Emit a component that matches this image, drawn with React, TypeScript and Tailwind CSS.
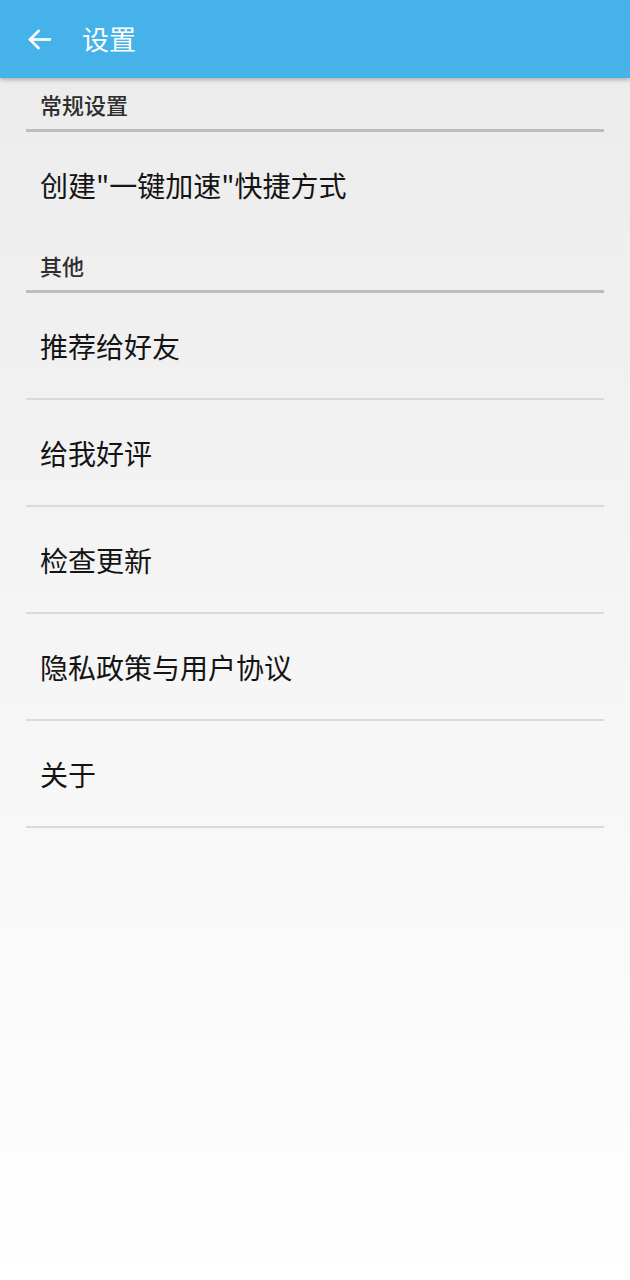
import { ReactNode } from 'react';

// settings screen: header + grouped list
function Category({ title }: { title: string }) {
  return (
    <div className="mx-[26px]">
      <div className="flex h-[51px] items-center pl-[14px] pt-[2px] text-[22px] font-medium text-[#2e2e2e]">
        {title}
      </div>
      <div className="h-[3px] bg-[#bdbdbd]" />
    </div>
  );
}

function Item({ children, divider = true }: { children: ReactNode; divider?: boolean }) {
  return (
    <div className="mx-[26px]">
      <div className="flex h-[105px] items-center pl-[14px] text-[28px] text-[#141414]">
        {children}
      </div>
      {divider && <div className="h-[2px] bg-[#dadada]" />}
    </div>
  );
}

export default function App() {
  return (
    <div
      className="flex h-[1280px] w-[630px] flex-col bg-gradient-to-b from-[#ebebeb] to-[#ffffff]"
      style={{ fontFamily: '"Noto Sans CJK SC", "Noto Sans", sans-serif' }}
    >
      <header className="relative z-10 flex h-[78px] shrink-0 items-center bg-[#45b3ea] shadow-[0_2px_4px_rgba(0,0,0,0.25)]">
        <svg
          className="ml-[26px]"
          width="27"
          height="27"
          viewBox="0 0 24 24"
          fill="none"
          stroke="#ffffff"
          strokeWidth="2.4"
          strokeLinecap="square"
        >
          <path d="M21 12H4" />
          <path d="M11 4.5 3.5 12l7.5 7.5" />
        </svg>
        <span className="ml-[29px] text-[27px] text-white">设置</span>
      </header>

      <Category title="常规设置" />
      <div className="flex h-[107px] flex-col">
        <Item divider={false}>创建"一键加速"快捷方式</Item>
      </div>

      <Category title="其他" />
      <div className="flex flex-col">
        <Item>推荐给好友</Item>
        <Item>给我好评</Item>
        <Item>检查更新</Item>
        <Item>隐私政策与用户协议</Item>
        <Item>关于</Item>
      </div>
    </div>
  );
}
